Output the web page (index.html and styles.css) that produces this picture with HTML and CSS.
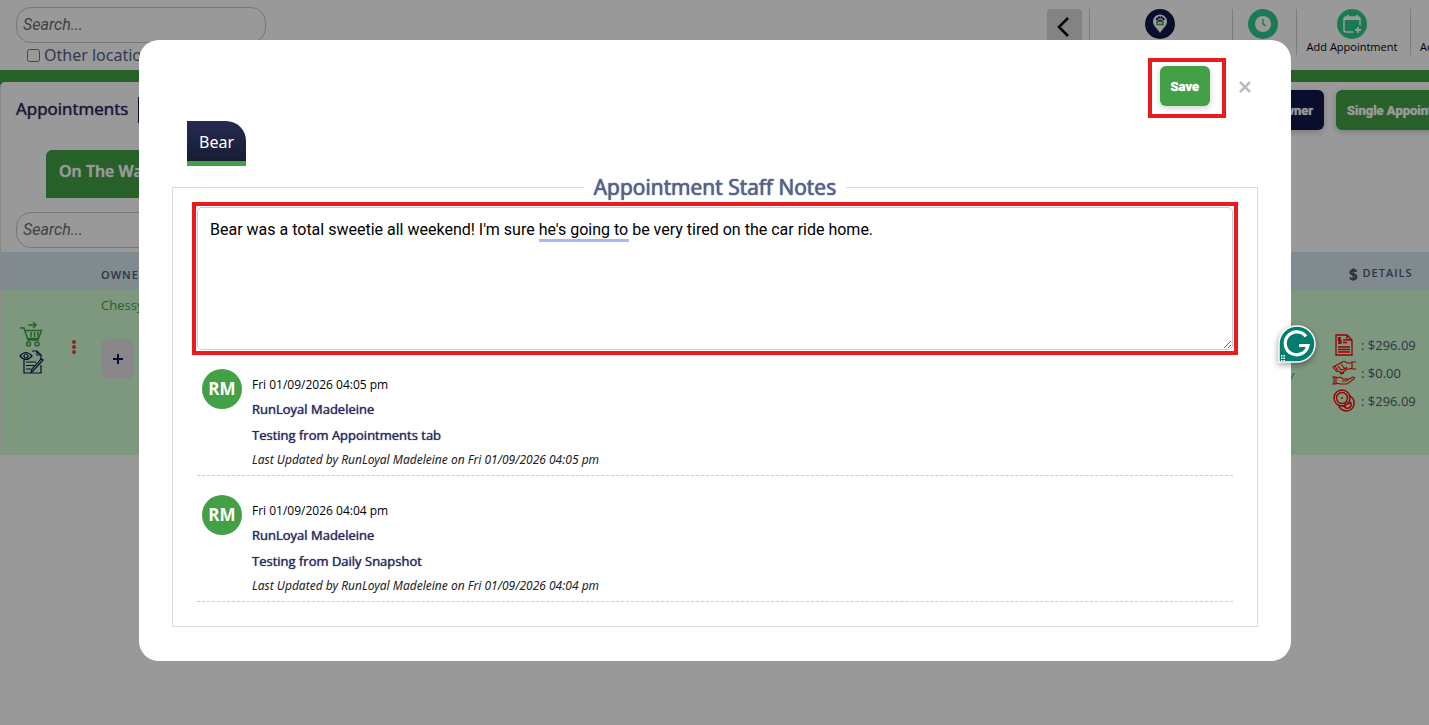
FILE: index.html
```html
<!DOCTYPE html>
<html lang="en">
<head>
    <meta charset="UTF-8">
    <meta name="viewport" content="width=device-width, initial-scale=1.0">
    <title>Appointments</title>
    <link rel="stylesheet" href="styles.css">
</head>
<body>
    <header class="topbar">
        <div class="topbar-search">
            <input type="text" class="search" placeholder="Search..." aria-label="Search">
            <div class="check-row">
                <input type="checkbox" id="other_locations">
                <label for="other_locations">Other locations</label>
            </div>
        </div>

        <nav class="topbar-nav">
            <button type="button" class="back" aria-label="Back">
                <svg width="14" height="20" viewBox="0 0 14 20"><path d="M11 1 L2 10 L11 19" fill="none" stroke="#000" stroke-width="2.500"/></svg>
            </button>
            <a href="#" class="nav-item nav-location" aria-label="Location">
                <svg width="30" height="30" viewBox="0 0 30 30">
                    <circle cx="15" cy="15" r="15" fill="#11174a"/>
                    <path d="M15 24 C12 19 8 17 8 12.500 A7 7 0 0 1 22 12.500 C22 17 18 19 15 24z" fill="#fff"/>
                    <g fill="#11174a"><circle cx="12" cy="10" r="1.200"/><circle cx="14" cy="8.500" r="1.200"/><circle cx="16.500" cy="8.500" r="1.200"/><circle cx="18.500" cy="10" r="1.200"/><path d="M12 12 Q15 9 18 12z"/></g>
                    <path d="M12 12.500h6v3h-6z" fill="none" stroke="#43a047" stroke-width="1.500"/>
                </svg>
            </a>
            <a href="#" class="nav-item nav-clock" aria-label="Clock">
                <svg width="30" height="30" viewBox="0 0 30 30">
                    <circle cx="15" cy="15" r="15" fill="#2ecc8b"/>
                    <circle cx="15" cy="15" r="8" fill="#fff"/>
                    <path d="M15 10v5l3 2" fill="none" stroke="#2ecc8b" stroke-width="1.500"/>
                </svg>
            </a>
            <a href="#" class="nav-item nav-add">
                <svg width="30" height="30" viewBox="0 0 30 30">
                    <circle cx="15" cy="15" r="15" fill="#2ecc8b"/>
                    <rect x="7" y="8" width="16" height="15" rx="2" fill="none" stroke="#fff" stroke-width="1.500"/>
                    <path d="M7 8h16v3H7z" fill="#fff"/>
                    <path d="M11 6v3M20 6v3" stroke="#fff" stroke-width="2"/>
                    <circle cx="21" cy="21" r="5" fill="#2ecc8b"/>
                    <path d="M21 18v6M18 21h6" stroke="#fff" stroke-width="1.800"/>
                </svg>
                <span>Add Appointment</span>
            </a>
            <a href="#" class="nav-item nav-more"><span>Add</span></a>
        </nav>
    </header>

    <main class="band">
        <section class="panel">
            <div class="panel-head">
                <h1>Appointments</h1>
                <button type="button" class="filter" aria-label="Filter"></button>
                <div class="panel-actions">
                    <button type="button" class="btn btn-navy">Add Owner</button>
                    <button type="button" class="btn btn-single">Single Appointment</button>
                </div>
            </div>
            <button type="button" class="status-tab">On The Way</button>
            <div class="table-search">
                <input type="text" class="search" placeholder="Search..." aria-label="Search appointments">
            </div>

            <table class="appointments">
                <colgroup>
                    <col class="col-icons">
                    <col class="col-menu">
                    <col>
                    <col class="col-day">
                    <col class="col-details">
                </colgroup>
                <thead>
                    <tr>
                        <th></th>
                        <th></th>
                        <th class="owner-head">Owner</th>
                        <th></th>
                        <th class="details-head"><b>$</b> Details</th>
                    </tr>
                </thead>
                <tbody>
                    <tr>
                        <td class="row-icons">
                            <svg width="24" height="26" viewBox="0 0 24 26" fill="none" stroke="#43a047" stroke-width="1.500">
                                <path d="M1 7h4l4 12h11M5.500 9.500h17l-3 8H9M9 4h8M14 1l3 3-3 3M12 11v5M15.500 11v5M19 11v5"/>
                                <circle cx="9.500" cy="23" r="2"/><circle cx="18" cy="23" r="2"/>
                            </svg>
                            <svg width="25" height="24" viewBox="0 0 25 24" fill="none" stroke="#11174a" stroke-width="1.200">
                                <path d="M5 10v13h17v-8M13 1h5l4 4v5M18 1v4h4M7 12h10M7 15.500h8M7 19h5"/>
                                <path d="M1 6q6-7 12 0q-6 7-12 0z"/><circle cx="7" cy="6" r="2"/>
                                <path d="M24 10L14 21l-2 1 1-3L22 9z"/>
                            </svg>
                        </td>
                        <td class="row-menu">
                            <svg width="4" height="14" viewBox="0 0 4 14" fill="#e5432f"><circle cx="2" cy="2" r="2"/><circle cx="2" cy="7" r="2"/><circle cx="2" cy="12" r="2"/></svg>
                        </td>
                        <td class="row-owner">
                            <a href="#">Chessy</a>
                            <button type="button" class="plus" aria-label="Add">
                                <svg width="12" height="12" viewBox="0 0 12 12"><path d="M6 1v10M1 6h10" stroke="#11174a" stroke-width="2"/></svg>
                            </button>
                        </td>
                        <td class="row-day">y</td>
                        <td class="row-details">
                            <div class="amount">
                                <svg width="24" height="24" viewBox="0 0 24 24" fill="none" stroke="#f00" stroke-width="1.300">
                                    <path d="M4 2h11l5 5v15H4zM15 2v5h5M6 14h12M6 16.500h12M6 19h12M11 7h3M11 9.500h4M9 5H6.500v2.500H9V10H6M7.700 4v7"/>
                                </svg>
                                <span>: $296.09</span>
                            </div>
                            <div class="amount">
                                <svg width="24" height="24" viewBox="0 0 24 24" fill="none" stroke="#f00" stroke-width="1.100">
                                    <path d="M24 1h-4v7h4M20 2h-5l-3-2-9 5 3 5 4 2 5-4 3 0 2-1M6 5l3 4 3-1M9 3l4 5 2-2M8 11l1 2 3-1M3 5l-2 1 4 5"/>
                                    <path d="M0 16h4v7H0M2 16v7M4 17l4-1 3 2h4q1 2-1 2h-4M15 19l6-3q2 0 1 2l-7 5H8l-4-1"/>
                                </svg>
                                <span>: $0.00</span>
                            </div>
                            <div class="amount">
                                <svg width="24" height="24" viewBox="0 0 24 24" fill="none" stroke="#f00" stroke-width="1.400">
                                    <circle cx="10" cy="9" r="8"/><circle cx="10" cy="9" r="5.500"/><path d="M10 8v2"/>
                                    <path d="M18 7q5 3 4 9q-2 6-8 6q-6-1-7-5M17 12q3 2 2 5q-2 3-5 2l-3-2M15 13l3 2M13 14v4"/>
                                </svg>
                                <span>: $296.09</span>
                            </div>
                        </td>
                    </tr>
                </tbody>
            </table>
        </section>
    </main>

    <div class="backdrop">
        <div class="modal" role="dialog" aria-labelledby="notes_title">
            <div class="modal-head">
                <div class="highlight save-highlight">
                    <button type="submit" form="notes_form" class="btn btn-save">Save</button>
                </div>
                <button type="button" class="close" aria-label="Close">
                    <svg width="12" height="12" viewBox="0 0 12 12"><path d="M1 1l10 10M11 1L1 11" stroke="#bdbdbd" stroke-width="2.500"/></svg>
                </button>
            </div>

            <button type="button" class="pet-tab">Bear</button>

            <form id="notes_form">
                <fieldset>
                    <legend id="notes_title">Appointment Staff Notes</legend>

                    <div class="note-box">
                        <textarea aria-labelledby="notes_title" spellcheck="false">Bear was a total sweetie all weekend! I'm sure he's going to be very tired on the car ride home.</textarea>
                        <span class="suggestion"></span>
                    </div>

                    <article class="note">
                        <div class="avatar">RM</div>
                        <div class="note-body">
                            <p class="note-date">Fri 01/09/2026 04:05 pm</p>
                            <p class="note-name">RunLoyal Madeleine</p>
                            <p class="note-text">Testing from Appointments tab</p>
                            <p class="note-updated">Last Updated by RunLoyal Madeleine on Fri 01/09/2026 04:05 pm</p>
                        </div>
                    </article>

                    <article class="note">
                        <div class="avatar">RM</div>
                        <div class="note-body">
                            <p class="note-date">Fri 01/09/2026 04:04 pm</p>
                            <p class="note-name">RunLoyal Madeleine</p>
                            <p class="note-text">Testing from Daily Snapshot</p>
                            <p class="note-updated">Last Updated by RunLoyal Madeleine on Fri 01/09/2026 04:04 pm</p>
                        </div>
                    </article>
                </fieldset>
            </form>

            <button type="button" class="assistant" aria-label="Writing assistant">
                <svg width="38" height="38" viewBox="0 0 38 38">
                    <path d="M1 37V19A18 18 0 1 1 19 37z" fill="#027e6f" stroke="#fff" stroke-width="1.500"/>
                    <path d="M28 11.500A11.500 11.500 0 1 0 30 20.500H21" fill="none" stroke="#fff" stroke-width="3.200"/>
                    <g fill="#fff"><path d="M3 30h1.500v1.500H3zM5.500 30H7v1.500H5.500zM3 32.500h1.500V34H3zM5.500 32.500H7V34H5.500zM3 35h1.500v1H3zM5.500 35H7v1H5.500z"/></g>
                </svg>
            </button>
        </div>
    </div>
</body>
</html>
```

FILE: styles.css
```css
*{
    margin: 0;
    padding: 0;
    box-sizing: border-box;
}

body{
    font-family: "Open Sans", sans-serif;
    font-size: 13px;
    color: #2a2a5c;
    background-color: #fff;
    min-height: 100vh;
    overflow: hidden;
}

button{
    border: none;
    background: none;
    cursor: pointer;
}

a{
    color: inherit;
    text-decoration: none;
}

svg{
    display: block;
}

/* top bar */
.topbar{
    display: flex;
    justify-content: space-between;
    height: 70px;
    padding-left: 16px;
}

.topbar-search{
    padding-top: 7px;
}

.search{
    display: block;
    width: 250px;
    height: 36px;
    padding: 0 6px 2px;
    border: 1px solid #c3c8cc;
    border-radius: 15px;
    background-color: transparent;
    font-family: Roboto, sans-serif;
    font-size: 16px;
    font-style: italic;
}

.search::placeholder{
    color: #6c6c6c;
}

.check-row{
    display: flex;
    align-items: center;
    gap: 4px;
    padding-left: 11px;
    font-family: "Noto Sans", sans-serif;
    font-size: 16px;
    line-height: 24px;
    color: #566387;
}

.check-row input{
    width: 13px;
    height: 13px;
}

.topbar-nav{
    display: flex;
    width: 382px;
    padding-top: 9px;
    overflow: hidden;
}

.back{
    display: flex;
    flex: none;
    justify-content: center;
    align-items: center;
    width: 35px;
    height: 36px;
    margin-right: 7px;
    padding-right: 2px;
    border-radius: 4px;
    background-color: #dadada;
}

.nav-item{
    display: flex;
    flex: none;
    flex-direction: column;
    align-items: center;
    height: 46px;
    padding-right: 3px;
    border-left: 1px solid #d0d0d0;
    font-size: 11px;
    line-height: 16px;
    color: #000;
}

.nav-location{
    width: 143px;
}

.nav-clock{
    width: 64px;
}

.nav-add{
    width: 114px;
}

.nav-more{
    padding: 30px 9px 0;
}

/* appointments panel */
.band{
    padding-top: 12px;
    background-color: #43a047;
}

.panel{
    border-left: 1px solid #e6e6e6;
    border-radius: 5px 0 0 0;
    background-color: #fff;
    overflow: hidden;
}

.panel-head{
    display: flex;
    align-items: center;
    padding: 8px 0 0 15px;
}

.panel-head h1{
    padding-bottom: 3px;
    font-size: 17px;
    font-weight: 400;
    text-shadow: 0 0 1px #2a2a5c;
}

.filter{
    width: 40px;
    height: 26px;
    margin-left: 10px;
    background-color: #11174a;
}

.panel-actions{
    display: flex;
    gap: 12px;
    width: 200px;
    margin-left: auto;
}

.btn{
    flex: none;
    height: 40px;
    padding: 0 11px;
    border-radius: 6px;
    background-color: #43a047;
    box-shadow: 0 2px 6px rgba(0, 0, 0, 0.2);
    color: #fff;
    font-family: Roboto, sans-serif;
    font-size: 13px;
    font-weight: 700;
    text-shadow: 0 0 1px #fff;
}

.btn-navy{
    width: 95px;
    background-color: #11174a;
    text-align: right;
}

.status-tab{
    display: block;
    height: 48px;
    margin: 20px 0 0 45px;
    padding: 0 13px 6px;
    border-radius: 6px 6px 0 0;
    background-color: #43a047;
    color: #fff;
    font-family: "Open Sans", sans-serif;
    font-size: 16px;
    font-weight: 600;
    text-shadow: 0 0 1px #fff;
}

.table-search{
    padding: 14px 0 4px 15px;
}

.appointments{
    width: 100%;
    border-collapse: collapse;
    table-layout: fixed;
    color: #4b5775;
}

.col-icons{
    width: 60px;
}

.col-menu{
    width: 28px;
}

.col-day{
    width: 60px;
}

.col-details{
    width: 109px;
}

.appointments th{
    height: 38px;
    padding-top: 6px;
    background-color: #d7e6ef;
    font-size: 11px;
    font-weight: 600;
    letter-spacing: 1px;
    text-align: left;
    text-transform: uppercase;
}

.appointments .owner-head{
    padding-left: 12px;
}

.appointments .details-head{
    padding-left: 29px;
}

.details-head b{
    font-size: 15px;
    line-height: 16px;
    vertical-align: middle;
}

.appointments td{
    height: 165px;
    background-color: #d2fdd4;
    vertical-align: top;
}

.row-icons svg{
    margin: 3px 0 0 18px;
}

.appointments .row-icons{
    padding-top: 28px;
}

.appointments .row-menu{
    padding: 50px 0 0 11px;
}

.appointments .row-owner{
    padding: 5px 0 0 12px;
    line-height: 20px;
    color: #43a047;
}

.plus{
    display: flex;
    justify-content: center;
    align-items: center;
    width: 33px;
    height: 40px;
    margin-top: 24px;
    border-radius: 6px;
    background-color: #e6e1e6;
}

.appointments .row-day{
    padding: 76px 26px 0 0;
    font-style: italic;
    text-align: right;
    color: #43a047;
}

.appointments .row-details{
    padding: 41px 0 0 12px;
}

.amount{
    display: flex;
    align-items: center;
    gap: 5px;
    height: 28px;
    white-space: nowrap;
}

/* notes modal */
.backdrop{
    position: fixed;
    inset: 0;
    padding: 40px 138px 40px 139px;
    background-color: rgba(0, 0, 0, 0.4);
}

.modal{
    position: relative;
    padding: 18px 33px 34px;
    border-radius: 20px;
    background-color: #fff;
}

.modal-head{
    display: flex;
    justify-content: flex-end;
    align-items: center;
    gap: 6px;
    margin-bottom: 3px;
}

.highlight{
    border: 4px solid #ea1b1e;
}

.save-highlight{
    padding: 4px 12px 8px 8px;
}

.btn-save{
    display: block;
}

.close{
    display: flex;
    justify-content: center;
    width: 26px;
    padding-bottom: 2px;
}

.pet-tab{
    display: block;
    height: 45px;
    margin: 0 0 8px 15px;
    padding: 2px 12px 0;
    border-bottom: 5px solid #43a047;
    border-radius: 0 20px 0 0;
    background: linear-gradient(#252b50, #181c33);
    color: #fff;
    font-family: "Noto Sans", sans-serif;
    font-size: 16px;
}

fieldset{
    padding: 7px 24px 24px;
    border: 1px solid #dcdcdc;
}

legend{
    margin: 0 auto;
    padding: 0 10px;
    color: #566387;
    font-size: 21px;
    line-height: 26px;
    text-shadow: 0 0 1px #566387, 0 0 1px #566387;
}

.note-box{
    position: relative;
    outline: 4px solid #ea1b1e;
    outline-offset: 1px;
}

.note-box textarea{
    display: block;
    width: 100%;
    height: 143px;
    padding: 10px 12px;
    border: 1px solid #c6ccd2;
    border-radius: 5px;
    outline: none;
    background-color: #fff;
    color: #000;
    font-family: Roboto, sans-serif;
    font-size: 16px;
    line-height: 24px;
}

/* grammar underline below "he's going to" */
.suggestion{
    position: absolute;
    top: 32px;
    left: 342px;
    width: 90px;
    height: 3px;
    background-color: #a3bdf3;
}

.note{
    display: flex;
    gap: 10px;
    padding: 19px 5px 2px;
    border-bottom: 1px dashed #b5d5dc;
}

.avatar{
    flex: none;
    width: 40px;
    height: 40px;
    border-radius: 50%;
    background-color: #43a047;
    color: #fff;
    font-size: 17px;
    font-weight: 700;
    line-height: 40px;
    text-align: center;
}

.note-body{
    padding-top: 4px;
    line-height: 24px;
}

.note-date{
    color: #000;
    font-size: 12px;
}

.note-name{
    margin-bottom: 2px;
}

.note-name,
.note-text{
    text-shadow: 0 0 1px #2a2a5c;
}

.note-updated{
    color: #222;
    font-family: "Noto Sans", sans-serif;
    font-size: 12px;
    font-style: italic;
    line-height: 26px;
}

.assistant{
    position: absolute;
    top: 285px;
    right: -25px;
    filter: drop-shadow(0 2px 3px rgba(0, 0, 0, 0.4));
}
```
